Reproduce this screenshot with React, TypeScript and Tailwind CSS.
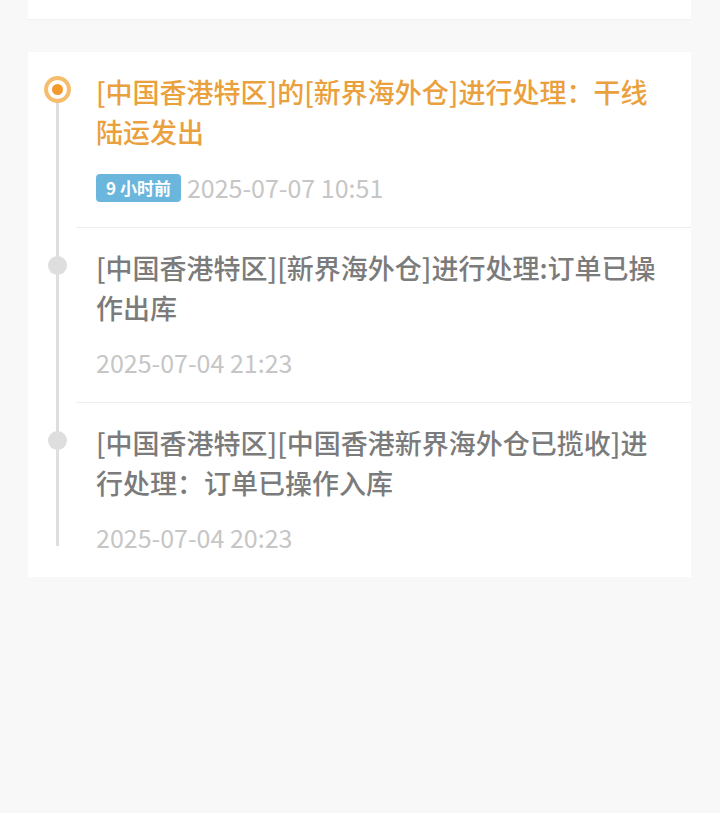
const font = { fontFamily: '"Noto Sans CJK SC", "Noto Sans", sans-serif' };

type Step = {
  text: string;
  time: string;
  badge?: string;
  active?: boolean;
};

const steps: Step[] = [
  {
    text: "[中国香港特区]的[新界海外仓]进行处理：干线陆运发出",
    time: "2025-07-07 10:51",
    badge: "9 小时前",
    active: true,
  },
  {
    text: "[中国香港特区][新界海外仓]进行处理:订单已操作出库",
    time: "2025-07-04 21:23",
  },
  {
    text: "[中国香港特区][中国香港新界海外仓已揽收]进行处理：订单已操作入库",
    time: "2025-07-04 20:23",
  },
];

const App = () => {
  return (
    <div className="min-h-[813px] bg-[#f8f8f8] pl-[28px] pr-[29px]" style={font}>
      <div className="h-[20px] bg-white border-b border-[#f0f0f0]" />

      <div className="mt-[32px] bg-white">
        {steps.map((step, i) => {
          const first = i === 0;
          const last = i === steps.length - 1;
          return (
            <div key={i} className="flex">
              <div className="relative w-[48px] shrink-0">
                <div
                  className={`absolute left-[28px] w-[3px] bg-[#dedede] ${
                    first ? "top-[37px] bottom-0" : last ? "top-0 bottom-[31px]" : "top-0 bottom-0"
                  }`}
                />
                {step.active ? (
                  <div className="absolute left-[16px] top-[24px] w-[27px] h-[27px] rounded-full bg-[#f6bd6e] flex items-center justify-center">
                    <div className="w-[19px] h-[19px] rounded-full bg-white flex items-center justify-center">
                      <div className="w-[11px] h-[11px] rounded-full bg-[#f39a2c]" />
                    </div>
                  </div>
                ) : (
                  <div className="absolute left-[20px] top-[28px] w-[19px] h-[19px] rounded-full bg-[#dedede]" />
                )}
              </div>

              <div
                className={`flex-1 pl-[20px] pr-[23px] pt-[20px] pb-[23px] ${
                  last ? "" : "border-b border-[#eeeeee]"
                }`}
              >
                <div
                  className={`text-[27px] leading-[40px] font-medium ${
                    step.active ? "text-[#eaa03c]" : "text-[#7b7b7b]"
                  }`}
                >
                  {step.text}
                </div>
                <div className={`flex items-center gap-[6px] h-[32px] ${first ? "mt-[20px]" : "mt-[19px]"}`}>
                  {step.badge && (
                    <span className="h-[28px] px-[10px] rounded-[4px] bg-[#6bb6dd] text-white text-[17px] font-bold flex items-center">
                      {step.badge}
                    </span>
                  )}
                  <span className="text-[25px] text-[#c6c6c6]">{step.time}</span>
                </div>
              </div>
            </div>
          );
        })}
      </div>
    </div>
  );
};

export default App;
